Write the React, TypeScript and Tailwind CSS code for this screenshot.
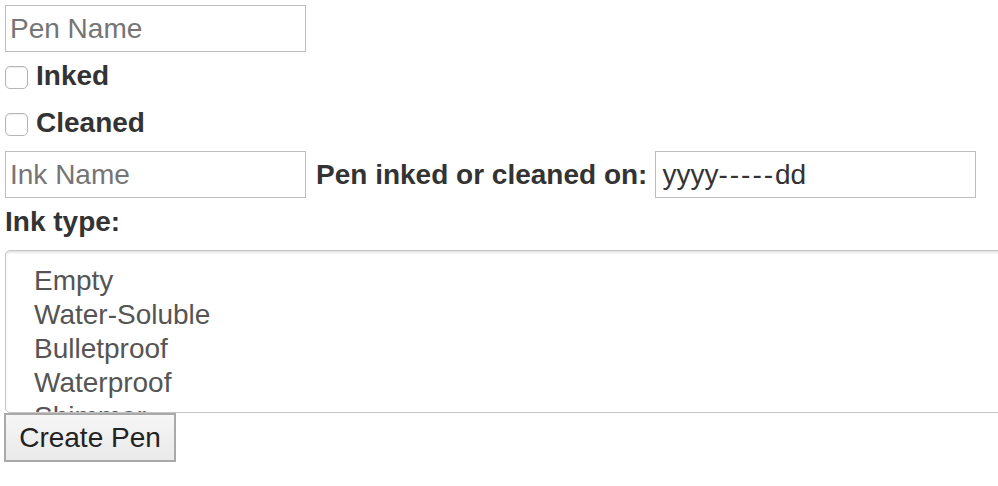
import {useState} from "react";

const INK_TYPES = ["Empty", "Water-Soluble", "Bulletproof", "Waterproof", "Shimmer"];

export default function App() {
  const [inked, setInked] = useState(false);
  const [cleaned, setCleaned] = useState(false);

  return (
    <div className="w-full overflow-hidden bg-white pl-[5px] pt-[5px] font-['Liberation_Sans',Arial,sans-serif] text-[28px] text-[#333]">
      <form className="flex flex-col items-start">
        <input
          type="text"
          placeholder="Pen Name"
          className="h-[47px] w-[301px] border border-[#bdbdbd] px-[4px] text-[28px] text-[#333] outline-none placeholder:text-[#757575]"
        />

        <label className="flex h-[47px] items-center gap-[9px] font-bold">
          <input
            type="checkbox"
            checked={inked}
            onChange={(e) => setInked(e.target.checked)}
            className="mt-[4px] h-[23px] w-[23px] appearance-none rounded-[5px] border border-[#b5b5b5] bg-white shadow-[inset_0_1px_2px_rgba(0,0,0,0.08)]"
          />
          <span className="-ml-[1px]">Inked</span>
        </label>

        <label className="flex h-[47px] items-center gap-[9px] font-bold">
          <input
            type="checkbox"
            checked={cleaned}
            onChange={(e) => setCleaned(e.target.checked)}
            className="mt-[4px] h-[23px] w-[23px] appearance-none rounded-[5px] border border-[#b5b5b5] bg-white shadow-[inset_0_1px_2px_rgba(0,0,0,0.08)]"
          />
          <span className="-ml-[1px]">Cleaned</span>
        </label>

        <div className="mt-[5px] flex items-center">
          <input
            type="text"
            placeholder="Ink Name"
            className="h-[47px] w-[301px] border border-[#bdbdbd] px-[4px] text-[28px] text-[#333] outline-none placeholder:text-[#757575]"
          />
          <label className="ml-[10px] mr-[8px] font-bold">Pen inked or cleaned on:</label>
          <div className="flex h-[47px] w-[321px] items-center border border-[#bdbdbd] px-[6px] text-[#333]">
            yyyy<span className="tracking-[2px]">-----</span>dd
          </div>
        </div>

        <label className="flex h-[47px] items-center font-bold">Ink type:</label>

        <div
          role="listbox"
          className="mt-[5px] h-[163px] w-[1010px] overflow-hidden rounded-[5px] border border-[#c4c4c4] pl-[28px] pt-[13px] text-[#555] shadow-[inset_0_2px_2px_rgba(0,0,0,0.1)]"
        >
          {INK_TYPES.map((t) => (
            <div key={t} role="option" className="h-[34px] leading-[34px]">
              {t}
            </div>
          ))}
        </div>

        <button
          type="button"
          className="-ml-[1px] h-[49px] w-[172px] border-2 border-[#a9a9a9] bg-gradient-to-b from-[#f6f6f6] to-[#e9e9e9] text-[28px] text-[#222]"
        >
          Create Pen
        </button>
      </form>
    </div>
  );
}
